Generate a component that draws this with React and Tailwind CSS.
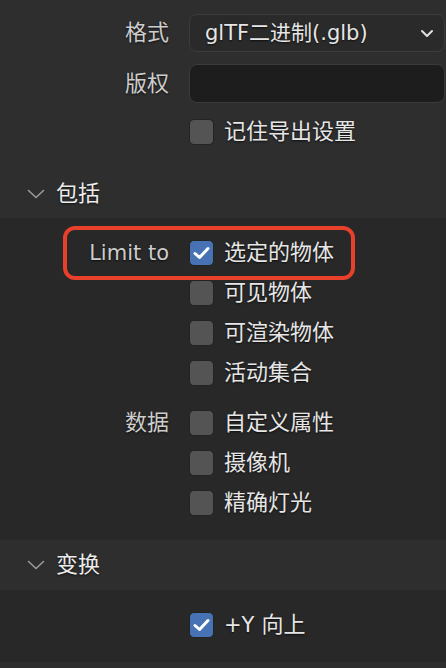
import React from 'react';

const FONT = "font-['DejaVu_Sans','Noto_Sans_CJK_SC',sans-serif]";
const SHADOW = '[text-shadow:0_1px_2px_rgba(0,0,0,0.7)]';

function Check({ checked }) {
  return (
    <span
      className={`w-[25px] h-[26px] rounded-[5px] border border-[#232323] flex items-center justify-center shrink-0 ${
        checked ? 'bg-[#4772b3]' : 'bg-[#545454]'
      }`}
    >
      {checked && (
        <svg width="17" height="14" viewBox="0 0 17 14" fill="none">
          <path d="M2 7.5 L6.5 11.5 L15 2.5" stroke="#fff" strokeWidth="3" strokeLinecap="round" strokeLinejoin="round" />
        </svg>
      )}
    </span>
  );
}

function Row({ label, children, className = '' }) {
  return (
    <div className={`flex items-center h-[40px] ${className}`}>
      <div className={`w-[189px] pr-[20px] text-right text-[#cdcdcd] ${SHADOW}`}>{label}</div>
      {children}
    </div>
  );
}

function CheckRow({ label, text, checked }) {
  return (
    <Row label={label}>
      <Check checked={checked} />
      <span className={`ml-[10px] text-[#e6e6e6] ${SHADOW}`}>{text}</span>
    </Row>
  );
}

function Chevron() {
  return (
    <svg width="18" height="10" viewBox="0 0 18 10" fill="none">
      <path d="M1.5 1.5 L9 8.5 L16.5 1.5" stroke="#9a9a9a" strokeWidth="1.6" strokeLinecap="round" strokeLinejoin="round" />
    </svg>
  );
}

function Header({ title, className = '' }) {
  return (
    <div className={`flex items-center bg-[#2e2e2e] pl-[27px] ${className}`}>
      <Chevron />
      <span className={`ml-[11px] text-[#ececec] ${SHADOW}`}>{title}</span>
    </div>
  );
}

export default function App() {
  return (
    <div className={`w-[446px] h-[668px] overflow-hidden bg-[#282828] text-[22px] leading-none ${FONT}`}>
      <div className="bg-[#2e2e2e] pt-[14px]">
        <div className="flex items-center h-[38px]">
          <div className={`w-[189px] pr-[20px] text-right text-[#cdcdcd] ${SHADOW}`}>格式</div>
          <div className="flex-1 h-full mr-[1px] rounded-[8px] border border-[#3c3c3c] bg-[#2a2a2a] flex items-center justify-between pl-[15px] pr-[10px]">
            <span className={`text-[#e6e6e6] text-[21px] ${SHADOW}`}>glTF二进制(.glb)</span>
            <svg width="14" height="9" viewBox="0 0 14 9" fill="none">
              <path d="M2 2 L7 7 L12 2" stroke="#e0e0e0" strokeWidth="2" strokeLinecap="round" strokeLinejoin="round" />
            </svg>
          </div>
        </div>
        <div className="flex items-center h-[39px] mt-[12px]">
          <div className={`w-[189px] pr-[20px] text-right text-[#cdcdcd] ${SHADOW}`}>版权</div>
          <div className="flex-1 h-full mr-[1px] rounded-[8px] border border-[#3a3a3a] bg-[#1d1d1d]" />
        </div>
        <div className="mt-[9px]">
          <CheckRow label="" text="记住导出设置" />
        </div>
        <Header title="包括" className="mt-[18px] h-[48px]" />
      </div>

      <div className="pt-[15px] pb-[17px]">
        <div className="relative">
          <CheckRow label={<span className="text-[21px]">Limit to</span>} text="选定的物体" checked />
          <div className="absolute left-[63px] top-[-7px] w-[292px] h-[54px] rounded-[12px] border-[4px] border-[#e8402a]" />
        </div>
        <CheckRow label="" text="可见物体" />
        <CheckRow label="" text="可渲染物体" />
        <CheckRow label="" text="活动集合" />
        <div className="mt-[10px]">
          <CheckRow label="数据" text="自定义属性" />
        </div>
        <CheckRow label="" text="摄像机" />
        <CheckRow label="" text="精确灯光" />
      </div>

      <Header title="变换" className="h-[50px]" />

      <div className="pt-[15px] pb-[17px]">
        <CheckRow label="" text={<span><span className="text-[21px]">+Y</span> 向上</span>} checked />
      </div>
      <div className="h-[6px] bg-[#2e2e2e]" />
    </div>
  );
}
